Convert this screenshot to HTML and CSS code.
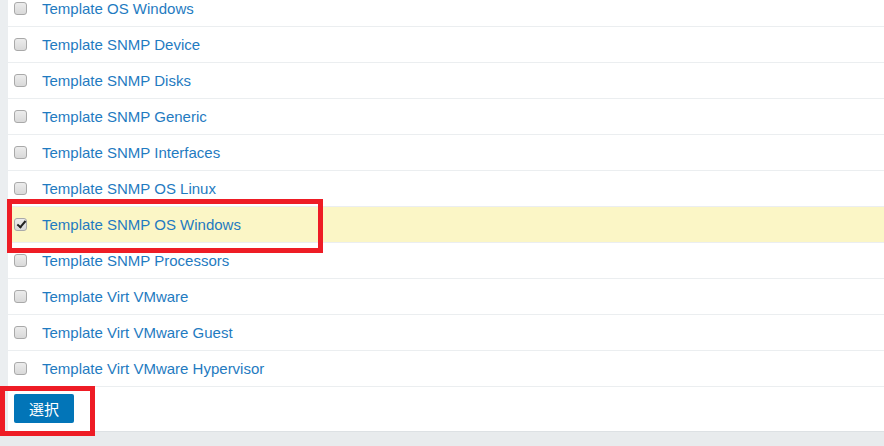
FILE: index.html
```html
<!DOCTYPE html>
<html lang="ja">
<head>
<meta charset="utf-8">
<link rel="stylesheet" href="styles.css">
</head>
<body>
<div class="panel">
  <ul class="list">
    <li class="row"><input type="checkbox" class="cb"><a class="link">Template OS Windows</a></li>
    <li class="row"><input type="checkbox" class="cb"><a class="link">Template SNMP Device</a></li>
    <li class="row"><input type="checkbox" class="cb"><a class="link">Template SNMP Disks</a></li>
    <li class="row"><input type="checkbox" class="cb"><a class="link">Template SNMP Generic</a></li>
    <li class="row"><input type="checkbox" class="cb"><a class="link">Template SNMP Interfaces</a></li>
    <li class="row"><input type="checkbox" class="cb"><a class="link">Template SNMP OS Linux</a></li>
    <li class="row selected"><input type="checkbox" class="cb" checked><a class="link">Template SNMP OS Windows</a><span class="mark mark-row"></span></li>
    <li class="row"><input type="checkbox" class="cb"><a class="link">Template SNMP Processors</a></li>
    <li class="row"><input type="checkbox" class="cb"><a class="link">Template Virt VMware</a></li>
    <li class="row"><input type="checkbox" class="cb"><a class="link">Template Virt VMware Guest</a></li>
    <li class="row"><input type="checkbox" class="cb"><a class="link">Template Virt VMware Hypervisor</a></li>
  </ul>
  <div class="footer">
    <button class="btn">選択</button>
    <span class="mark mark-btn"></span>
  </div>
</div>
<div class="bottom"></div>
</body>
</html>
```
FILE: styles.css
```css
html, body {
  margin: 0;
  padding: 0;
  background: #ebeef0;
  overflow: hidden;
  font-family: Arial, "Liberation Sans", "Noto Sans CJK JP", sans-serif;
}
.panel {
  margin-left: 8px;
  margin-top: -9px;
  background: #ffffff;
  position: relative;
}
.list {
  list-style: none;
  margin: 0;
  padding: 0;
}
.row {
  position: relative;
  height: 35px;
  border-bottom: 1px solid #ebeef0;
  display: flex;
  align-items: center;
  padding-left: 6px;
}
.row.selected {
  background: #fbf6c6;
}
.cb {
  appearance: none;
  -webkit-appearance: none;
  position: relative;
  width: 13px;
  height: 13px;
  margin: 0 15px 0 0;
  border: 1px solid #a9a9a9;
  border-radius: 3px;
  background: linear-gradient(#ececec, #d9d9d9);
  box-sizing: border-box;
}
.cb:checked::after {
  content: "";
  position: absolute;
  left: 4px;
  top: 0px;
  width: 3px;
  height: 7px;
  border: solid #222;
  border-width: 0 2px 2px 0;
  transform: rotate(40deg);
}
.link {
  color: #1f7bc1;
  font-size: 15px;
  cursor: pointer;
}
.footer {
  position: relative;
  height: 44px;
  padding: 7px 0 0 6px;
  box-sizing: border-box;
}
.btn {
  width: 60px;
  height: 29px;
  background: #0275b8;
  color: #ffffff;
  border: none;
  border-radius: 2px;
  font-family: "Noto Sans CJK JP", sans-serif;
  font-size: 15px;
  padding: 0;
}
.bottom {
  height: 20px;
  background: #e8ebed;
  border-top: 1px solid #dde1e4;
}
.mark {
  position: absolute;
  border: 5px solid #ee1c25;
  box-sizing: border-box;
  pointer-events: none;
}
.mark-row {
  left: -1px;
  top: -8px;
  width: 316px;
  height: 54px;
}
.mark-btn {
  left: -8px;
  top: -1px;
  width: 95px;
  height: 50px;
}
```
